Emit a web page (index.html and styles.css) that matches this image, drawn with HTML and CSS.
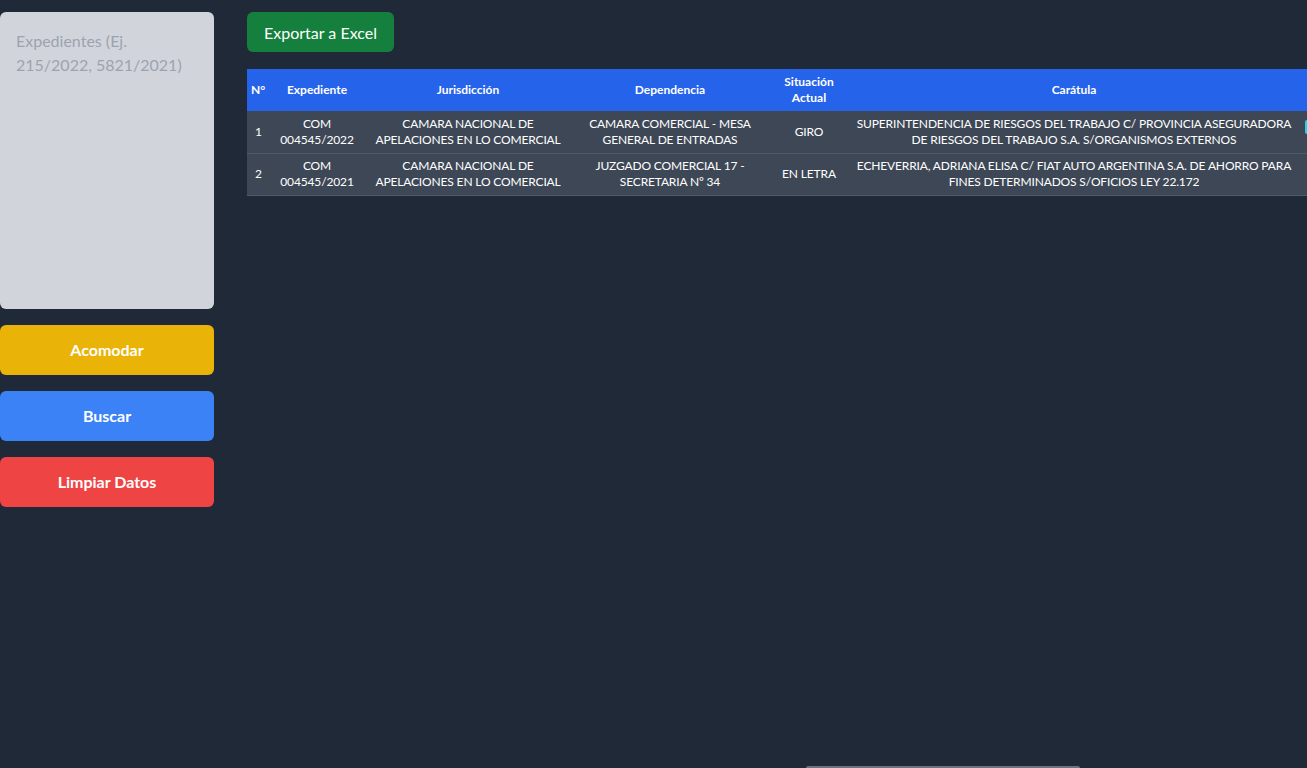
FILE: index.html
```html
<!DOCTYPE html>
<html lang="es">
<head>
<meta charset="utf-8">
<title>Expedientes</title>
<link rel="stylesheet" href="styles.css">
</head>
<body>
<div class="layout">
  <aside class="sidebar">
    <textarea class="exp-input" placeholder="Expedientes (Ej. 215/2022, 5821/2021)"></textarea>
    <button class="btn btn-yellow">Acomodar</button>
    <button class="btn btn-blue">Buscar</button>
    <button class="btn btn-red">Limpiar Datos</button>
  </aside>
  <main class="main">
    <div class="toolbar">
      <button class="btn-export">Exportar a Excel</button>
    </div>
    <div class="table-wrap">
      <table class="results">
        <colgroup>
          <col class="c-n"><col class="c-exp"><col class="c-jur"><col class="c-dep"><col class="c-sit"><col class="c-car"><col class="c-act">
        </colgroup>
        <thead>
          <tr>
            <th>N°</th>
            <th>Expediente</th>
            <th>Jurisdicción</th>
            <th>Dependencia</th>
            <th>Situación<br>Actual</th>
            <th>Carátula</th>
            <th class="th-act"></th>
          </tr>
        </thead>
        <tbody>
          <tr>
            <td>1</td>
            <td>COM<br>004545/2022</td>
            <td>CAMARA NACIONAL DE<br>APELACIONES EN LO COMERCIAL</td>
            <td>CAMARA COMERCIAL - MESA<br>GENERAL DE ENTRADAS</td>
            <td>GIRO</td>
            <td>SUPERINTENDENCIA DE RIESGOS DEL TRABAJO C/ PROVINCIA ASEGURADORA<br>DE RIESGOS DEL TRABAJO S.A. S/ORGANISMOS EXTERNOS</td>
            <td class="td-act"><span class="act-btn"></span></td>
          </tr>
          <tr>
            <td>2</td>
            <td>COM<br>004545/2021</td>
            <td>CAMARA NACIONAL DE<br>APELACIONES EN LO COMERCIAL</td>
            <td>JUZGADO COMERCIAL 17 -<br>SECRETARIA Nº 34</td>
            <td>EN LETRA</td>
            <td>ECHEVERRIA, ADRIANA ELISA C/ FIAT AUTO ARGENTINA S.A. DE AHORRO PARA<br>FINES DETERMINADOS S/OFICIOS LEY 22.172</td>
            <td class="td-act"></td>
          </tr>
        </tbody>
      </table>
    </div>
  </main>
</div>
<div class="scroll-thumb"></div>
</body>
</html>
```
FILE: styles.css
```css
* { box-sizing: border-box; }
html, body { margin: 0; height: 100%; }
body {
  background: #1f2937;
  font-family: Lato, "Noto Sans", sans-serif;
  color: #fff;
  overflow: hidden;
}
.layout {
  display: flex;
  align-items: flex-start;
  padding-top: 12px;
}
.sidebar {
  width: 214px;
  flex: none;
  display: flex;
  flex-direction: column;
  gap: 16px;
}
.exp-input {
  width: 214px;
  height: 297px;
  background: #d1d5db;
  border: none;
  border-radius: 6px;
  padding: 17px 16px;
  font-family: inherit;
  font-size: 16px;
  line-height: 24px;
  color: #111827;
  resize: none;
  outline: none;
  display: block;
}
.exp-input::placeholder { color: #9ca3af; }
.btn {
  height: 50px;
  border: none;
  border-radius: 6px;
  color: #fff;
  font-family: inherit;
  font-size: 16px;
  font-weight: 700;
  padding-bottom: 2px;
  cursor: pointer;
}
.btn-yellow { background: #eab308; }
.btn-blue { background: #3b82f6; }
.btn-red { background: #ef4444; }
.main {
  flex: 1;
  min-width: 0;
  margin-left: 33px;
  overflow: hidden;
}
.toolbar { margin-bottom: 17px; }
.btn-export {
  height: 40px;
  padding: 0 17px;
  background: #15803d;
  color: #fff;
  border: none;
  border-radius: 6px;
  font-family: inherit;
  font-size: 16px;
  cursor: pointer;
}
.table-wrap { width: 100%; overflow: hidden; }
.results {
  border-collapse: collapse;
  table-layout: fixed;
  width: 1160px;
  font-size: 12px;
  line-height: 16px;
}
.c-n { width: 23px; }
.c-exp { width: 94px; }
.c-jur { width: 208px; }
.c-dep { width: 196px; }
.c-sit { width: 82px; }
.c-car { width: 448px; }
.c-act { width: 109px; }
.results th {
  background: #2563eb;
  font-weight: 700;
  height: 42px;
  padding: 4px 4px;
  text-align: center;
}
.results td {
  background: #3d4756;
  height: 42px;
  padding: 4px 4px;
  text-align: center;
  border-bottom: 1px solid #4e5969;
  white-space: nowrap;
  letter-spacing: -0.15px;
}
.results td:first-child, .results th:first-child { padding: 4px 0 4px 4px; text-align: left; }
.results td:first-child { padding-left: 8px; }
.td-act { text-align: left !important; padding-left: 7px !important; }
.act-btn {
  display: inline-block;
  vertical-align: middle;
  background: #22d3ee;
  width: 30px;
  height: 14px;
  border-radius: 2px;
  margin-top: -12px;
}
.scroll-thumb {
  position: fixed;
  left: 806px;
  bottom: 0;
  width: 274px;
  height: 2px;
  background: #6b7380;
  border-radius: 2px 2px 0 0;
}
```
